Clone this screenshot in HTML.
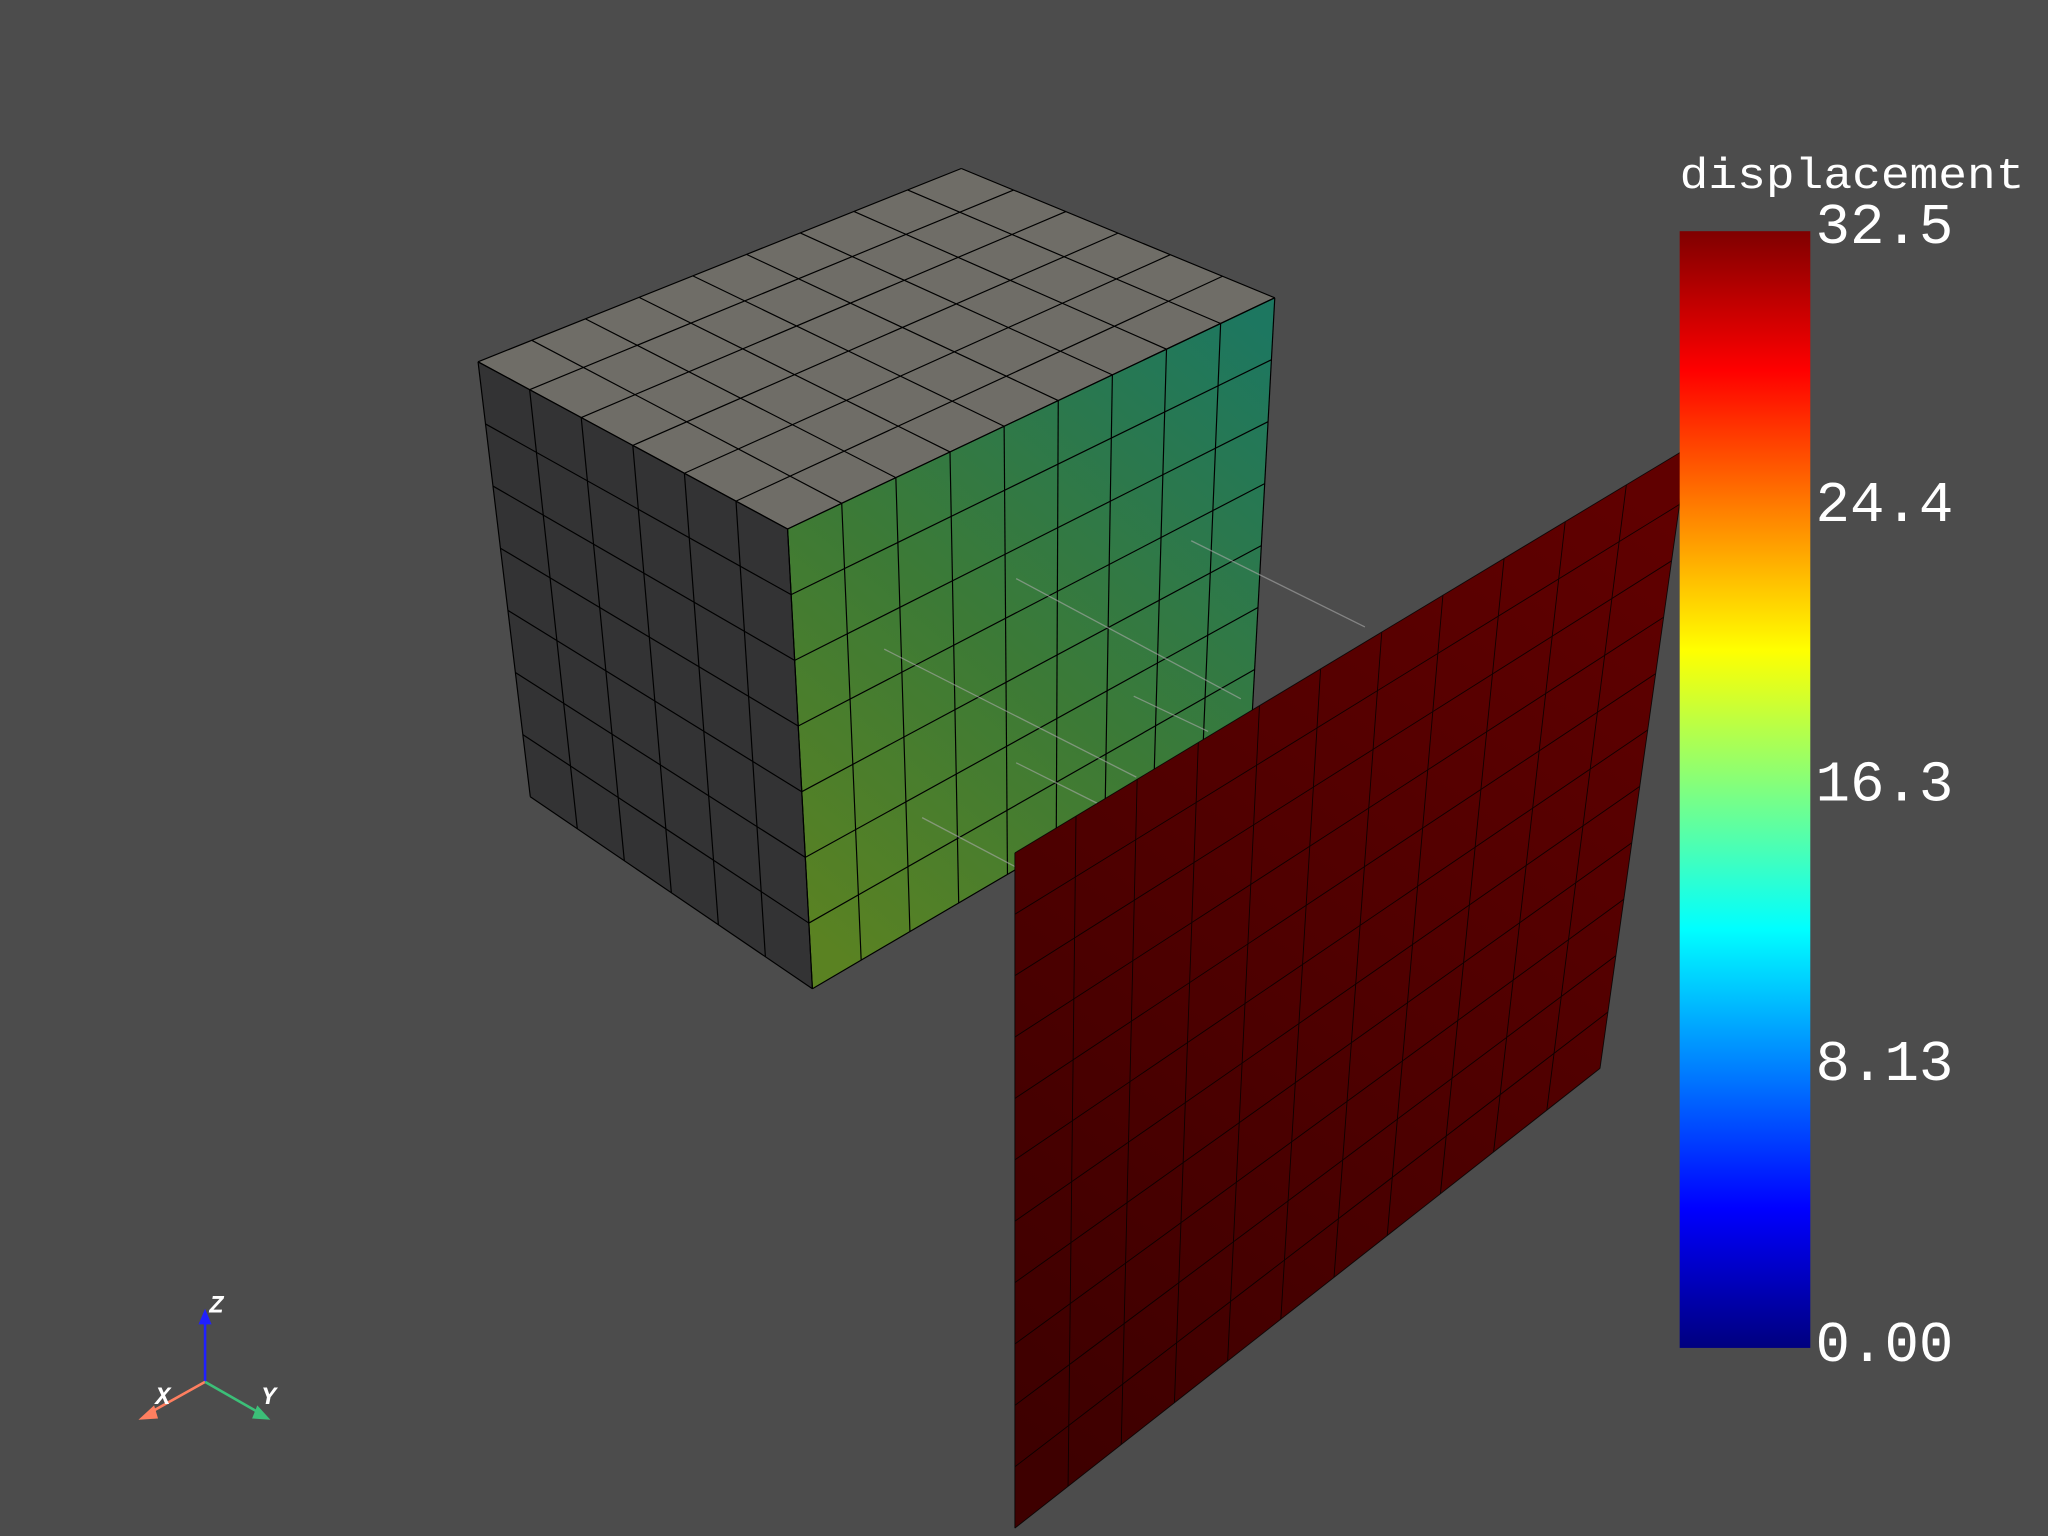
<!DOCTYPE html>
<html><head><meta charset="utf-8">
<style>
html,body{margin:0;padding:0;background:#4c4c4c;width:2048px;height:1536px;overflow:hidden}
svg{display:block}
text{font-family:"Liberation Mono","DejaVu Sans Mono",monospace;fill:#fff}
</style></head>
<body>
<svg id="s" width="2048" height="1536" viewBox="0 0 1568 1176" xmlns="http://www.w3.org/2000/svg">
<defs>
<linearGradient id="gf" x1="603" y1="700" x2="976" y2="260" gradientUnits="userSpaceOnUse">
<stop offset="0" stop-color="#5a8222"/><stop offset="0.45" stop-color="#3c7a36"/><stop offset="1" stop-color="#1d7760"/>
</linearGradient>
<linearGradient id="gp" x1="777" y1="1100" x2="1290" y2="400" gradientUnits="userSpaceOnUse">
<stop offset="0" stop-color="#3e0000"/><stop offset="1" stop-color="#600000"/>
</linearGradient>
<linearGradient id="jet" x1="0" y1="1" x2="0" y2="0">
<stop offset="0" stop-color="#00007f"/><stop offset="0.125" stop-color="#0000ff"/><stop offset="0.375" stop-color="#00ffff"/><stop offset="0.625" stop-color="#ffff00"/><stop offset="0.875" stop-color="#ff0000"/><stop offset="1" stop-color="#7f0000"/>
</linearGradient>
</defs>
<rect width="1568" height="1176" fill="#4c4c4c"/>
<polygon points="366,277 603,405 622,757 406,610" fill="#333334"/>
<polygon points="366,277 736,129 976,228 603,405" fill="#6f6d67"/>
<polygon points="603,405 976,228 958,560 622,757" fill="url(#gf)"/>
<g id="g1" stroke="#000" stroke-width="0.9" fill="none"></g>
<g id="lines" stroke="#aaa" stroke-width="1" opacity="0.6"></g>
<polygon points="777,653 1292,343 1225,818 777,1170" fill="url(#gp)"/>
<g id="g2" stroke="#000" stroke-width="0.7" fill="none" opacity="0.8"></g>
<rect x="1286" y="177" width="100" height="855" fill="url(#jet)"/>
<text x="1286" y="144" font-size="33" textLength="264" lengthAdjust="spacingAndGlyphs">displacement</text>
<text x="1390" y="186" font-size="44">32.5</text>
<text x="1390" y="399" font-size="44">24.4</text>
<text x="1390" y="613" font-size="44">16.3</text>
<text x="1390" y="827" font-size="44">8.13</text>
<text x="1390" y="1042" font-size="44">0.00</text>
<line x1="157" y1="1058" x2="157" y2="1010" stroke="#2020ff" stroke-width="2"/>
<polygon points="152,1014 162,1014 157,1002" fill="#2020ff"/>
<line x1="157" y1="1058" x2="114" y2="1082" stroke="#ff7f60" stroke-width="2"/>
<polygon points="106,1087 118,1076 121,1086" fill="#ff7f60"/>
<line x1="157" y1="1058" x2="199" y2="1082" stroke="#3cbf78" stroke-width="2"/>
<polygon points="207,1087 193,1086 197,1076" fill="#3cbf78"/>
<text x="160" y="1005" font-size="19" font-style="italic" font-weight="bold" font-family="Liberation Sans">Z</text>
<text x="119" y="1075" font-size="19" font-style="italic" font-weight="bold" font-family="Liberation Sans">X</text>
<text x="200" y="1075" font-size="19" font-style="italic" font-weight="bold" font-family="Liberation Sans">Y</text>
</svg>
<script>
var NS="http://www.w3.org/2000/svg";
function L(g,a,b){var l=document.createElementNS(NS,"line");l.setAttribute("x1",a[0]);l.setAttribute("y1",a[1]);l.setAttribute("x2",b[0]);l.setAttribute("y2",b[1]);g.appendChild(l);}
function lerp(a,b,t){return[a[0]+(b[0]-a[0])*t,a[1]+(b[1]-a[1])*t];}
function grid(g,p0,p1,p2,p3,nu,nv){
 for(var i=0;i<=nu;i++){var t=i/nu;L(g,lerp(p0,p1,t),lerp(p3,p2,t));}
 for(var j=0;j<=nv;j++){var t=j/nv;L(g,lerp(p0,p3,t),lerp(p1,p2,t));}
}
var g1=document.getElementById("g1"),g2=document.getElementById("g2"),gl=document.getElementById("lines");
grid(g1,[366,277],[603,405],[622,757],[406,610],6,7);
grid(g1,[366,277],[736,129],[976,228],[603,405],9,6);
grid(g1,[603,405],[976,228],[958,560],[622,757],9,7);
grid(g2,[777,653],[1292,343],[1225,818],[777,1170],11,11);
[[[912,414],[1045,480]],[[778,443],[950,535]],[[677,497],[870,595]],[[868,533],[925,560]],[[778,584],[840,615]],[[706,626],[780,665]]].forEach(function(s){L(gl,s[0],s[1]);});
</script>
</body></html>
